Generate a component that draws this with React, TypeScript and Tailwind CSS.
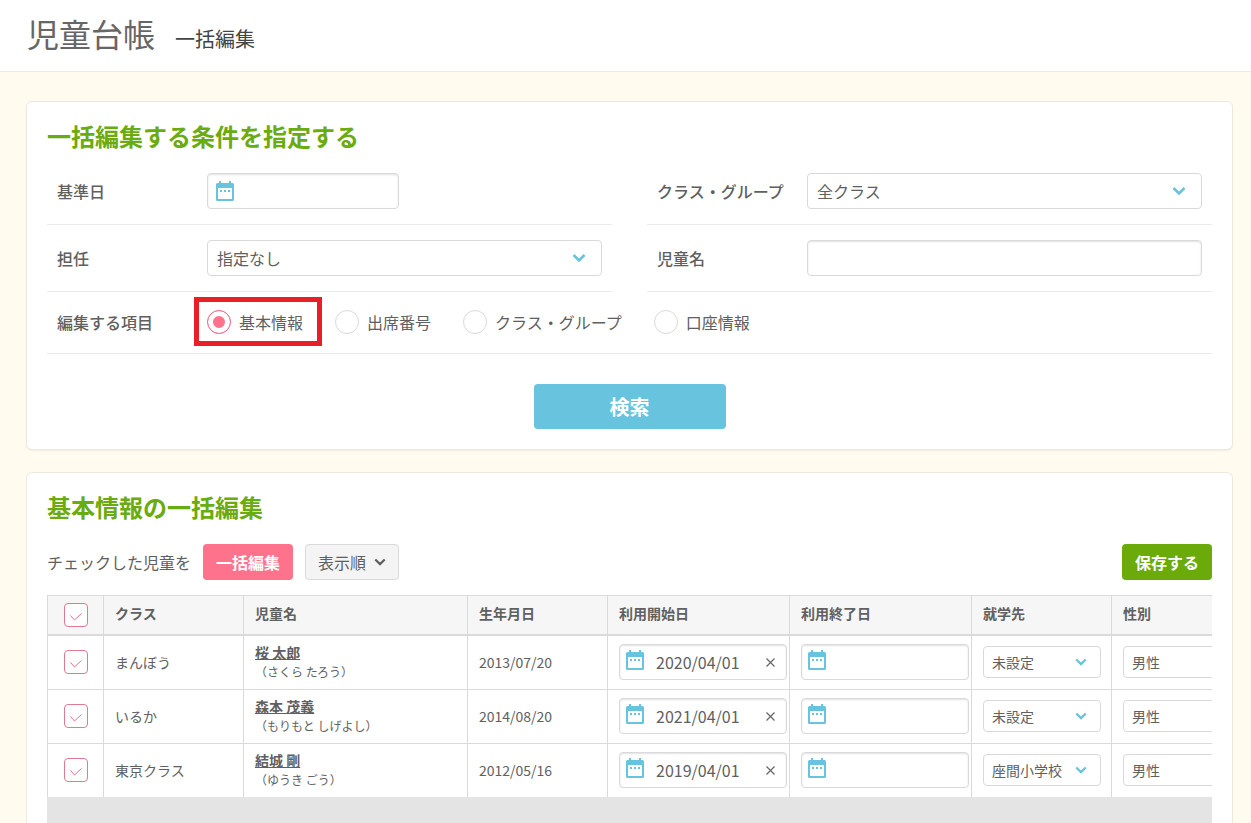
import { useState } from 'react';
import type { ReactNode } from 'react';
import clsx from 'clsx';

interface Child {
  id: number;
  className: string;
  name: string;
  kana: string;
  birthday: string;
  startDate: string;
  school: string;
  gender: string;
}

const children: Child[] = [
  { id: 1, className: 'まんぼう', name: '桜 太郎', kana: '（さくら たろう）', birthday: '2013/07/20', startDate: '2020/04/01', school: '未設定', gender: '男性' },
  { id: 2, className: 'いるか', name: '森本 茂義', kana: '（もりもと しげよし）', birthday: '2014/08/20', startDate: '2021/04/01', school: '未設定', gender: '男性' },
  { id: 3, className: '東京クラス', name: '結城 剛', kana: '（ゆうき ごう）', birthday: '2012/05/16', startDate: '2019/04/01', school: '座間小学校', gender: '男性' },
];

const editItems = ['基本情報', '出席番号', 'クラス・グループ', '口座情報'];

const columns = [
  { label: 'クラス', width: 'w-[140px]' },
  { label: '児童名', width: 'w-[224px]' },
  { label: '生年月日', width: 'w-[140px]' },
  { label: '利用開始日', width: 'w-[182px]' },
  { label: '利用終了日', width: 'w-[182px]' },
  { label: '就学先', width: 'w-[140px]' },
  { label: '性別', width: 'w-[140px]' },
];

const inputClass =
  'h-9 w-full rounded border border-[#d9d9d9] bg-white text-base shadow-[inset_0_1px_2px_rgba(0,0,0,0.12)] outline-none';

function CalendarIcon() {
  return (
    <svg viewBox="0 0 18 20" className="h-5 w-[18px]" aria-hidden="true">
      <path
        fill="#67c3de"
        fillRule="evenodd"
        d="M3 0h2v2h8V0h2v2h1.500A1.500 1.500 0 0 1 18 3.500v15a1.500 1.500 0 0 1-1.500 1.500h-15A1.500 1.500 0 0 1 0 18.500v-15A1.500 1.500 0 0 1 1.500 2H3zM2 7v11h14V7z"
      />
      <path fill="#67c3de" d="M4 9h2v2H4zM8 9h2v2H8zM12 9h2v2h-2z" />
    </svg>
  );
}

function Chevron({ className }: { className: string }) {
  return (
    <svg viewBox="0 0 14 9" className={className} fill="none" stroke="currentColor" aria-hidden="true">
      <path d="M1.500 1.500 7 7l5.500-5.500" strokeWidth="2.600" />
    </svg>
  );
}

function SelectBox({ id, label, value, small }: { id: string; label?: string; value: string; small?: boolean }) {
  return (
    <div className={clsx('relative', small ? 'w-[118px]' : 'w-full')}>
      <select
        id={id}
        aria-label={label}
        className={clsx(
          'w-full appearance-none rounded border border-[#d9d9d9] bg-white outline-none',
          small ? 'h-8 px-2 text-sm' : 'h-9 px-[9px] text-base',
        )}
      >
        <option>{value}</option>
      </select>
      <Chevron
        className={clsx(
          'pointer-events-none absolute top-1/2 -translate-y-1/2 text-[#67c3de]',
          small ? 'right-[14px] h-2 w-3' : 'right-4 h-[9px] w-[14px]',
        )}
      />
    </div>
  );
}

function DateField({ id, label, value, compact }: { id: string; label?: string; value?: string; compact?: boolean }) {
  const [date, setDate] = useState(value ?? '');

  return (
    <div className={clsx('relative', compact ? 'w-[168px]' : 'w-48')}>
      <input
        id={id}
        aria-label={label}
        type="text"
        value={date}
        onChange={(e) => setDate(e.target.value)}
        className={clsx(inputClass, 'pr-8 pl-9')}
      />
      <span
        className={clsx(
          'pointer-events-none absolute',
          compact ? 'top-[6px] left-[7px]' : 'top-2 left-[9px]',
        )}
      >
        <CalendarIcon />
      </span>
      {date && (
        <button
          type="button"
          aria-label="クリア"
          onClick={() => setDate('')}
          className="absolute top-[13px] right-[11px] h-[11px] w-[11px]"
        >
          <svg viewBox="0 0 11 11" fill="none" stroke="#666" strokeWidth="1.200" aria-hidden="true">
            <path d="m1.500 1.500 8 8M9.500 1.500l-8 8" />
          </svg>
        </button>
      )}
    </div>
  );
}

function CheckBox({ label }: { label: string }) {
  return (
    <div className="relative mx-auto h-6 w-6">
      <input
        type="checkbox"
        defaultChecked
        aria-label={label}
        className="peer block h-6 w-6 appearance-none rounded border border-[#e07a90] bg-white"
      />
      <svg
        viewBox="0 0 24 24"
        className="pointer-events-none absolute inset-0 hidden peer-checked:block"
        fill="none"
        stroke="#f0708c"
        aria-hidden="true"
      >
        <path d="m6.500 12.500 4 4.500L17.500 10.500" />
      </svg>
    </div>
  );
}

function FormRow({ id, label, children }: { id: string; label: string; children: ReactNode }) {
  return (
    <div className="flex items-center border-b border-[#eaeaea] px-[10px] py-[15px]">
      <label htmlFor={id} className="w-[150px] shrink-0 font-medium">
        {label}
      </label>
      <div className="min-w-0 flex-1">{children}</div>
    </div>
  );
}

function SearchPanel() {
  return (
    <section className="rounded-md border border-[#ece9df] bg-white px-5 pt-4 pb-5 shadow-[0_1px_2px_rgba(0,0,0,0.06)]">
      <h2 className="mb-1 text-2xl leading-9 font-bold text-[#6aab10]">一括編集する条件を指定する</h2>
      <form onSubmit={(e) => e.preventDefault()}>
        <div className="grid grid-cols-2 gap-x-[35px]">
          <FormRow id="base-date" label="基準日">
            <DateField id="base-date" />
          </FormRow>
          <FormRow id="class-group" label="クラス・グループ">
            <SelectBox id="class-group" value="全クラス" />
          </FormRow>
          <FormRow id="teacher" label="担任">
            <SelectBox id="teacher" value="指定なし" />
          </FormRow>
          <FormRow id="child-name" label="児童名">
            <input id="child-name" type="text" className={clsx(inputClass, 'px-[9px]')} />
          </FormRow>
        </div>

        <fieldset className="border-b border-[#eaeaea] px-[10px]">
          <div className="flex items-center pt-[18px] pb-[19px]">
            <span id="edit-items" className="w-[150px] shrink-0 font-medium">
              編集する項目
            </span>
            <div role="radiogroup" aria-labelledby="edit-items" className="flex flex-wrap gap-8">
              {editItems.map((item, i) => (
                <label key={item} className="relative flex items-center gap-2 leading-6">
                  <input
                    type="radio"
                    name="edit-item"
                    defaultChecked={i === 0}
                    className="h-6 w-6 appearance-none rounded-full border border-[#d9d9d9] bg-white checked:border-[#f0708c] checked:bg-[#ff728c] checked:shadow-[inset_0_0_0_5px_#fff]"
                  />
                  {item}
                  {i === 0 && (
                    <span className="pointer-events-none absolute -top-[13px] -right-[19px] -bottom-3 -left-[13px] border-[5px] border-[#e81f27]" />
                  )}
                </label>
              ))}
            </div>
          </div>
        </fieldset>

        <button
          type="submit"
          className="mx-auto mt-[30px] block h-[45px] w-48 rounded bg-[#67c3de] text-xl font-bold text-white"
        >
          検索
        </button>
      </form>
    </section>
  );
}

function ChildTable() {
  return (
    <div className="flex flex-1 flex-col overflow-hidden bg-[#e4e4e4]">
      <table className="w-[1204px] table-fixed border-separate border-spacing-0 bg-white text-sm">
        <thead>
          <tr className="h-[41px] bg-[#f6f6f6]">
            <th className="w-14 border-t border-b-2 border-l border-[#dadada] p-0">
              <CheckBox label="すべて選択" />
            </th>
            {columns.map((column) => (
              <th
                key={column.label}
                className={clsx(
                  'border-t border-b-2 border-l border-[#dadada] p-0 pb-1 pl-[11px] text-left font-bold',
                  column.width,
                )}
              >
                {column.label}
              </th>
            ))}
          </tr>
        </thead>
        <tbody className="[&_td]:border-b [&_td]:border-l [&_td]:border-[#dadada] [&_td]:p-0 [&_td]:pb-[2px] [&_td]:pl-[11px] [&_tr:last-child_td]:border-b-0">
          {children.map((child) => (
            <tr key={child.id} className="h-[54px] last:h-[53px]">
              <td>
                <div className="pr-[11px]">
                  <CheckBox label={child.name} />
                </div>
              </td>
              <td>{child.className}</td>
              <td>
                <a href="#" className="block leading-5 font-bold underline">
                  {child.name}
                </a>
                <span className="block text-xs leading-5">{child.kana}</span>
              </td>
              <td>{child.birthday}</td>
              <td>
                <DateField id={`start-${child.id}`} label="利用開始日" value={child.startDate} compact />
              </td>
              <td>
                <DateField id={`end-${child.id}`} label="利用終了日" compact />
              </td>
              <td>
                <SelectBox id={`school-${child.id}`} label="就学先" value={child.school} small />
              </td>
              <td>
                <SelectBox id={`gender-${child.id}`} label="性別" value={child.gender} small />
              </td>
            </tr>
          ))}
        </tbody>
      </table>
      <div className="min-h-6 flex-1" />
    </div>
  );
}

function EditPanel() {
  return (
    <section className="flex flex-1 flex-col rounded-t-md border border-b-0 border-[#ece9df] bg-white px-5 pt-4">
      <h2 className="text-2xl leading-9 font-bold text-[#6aab10]">基本情報の一括編集</h2>
      <div className="mt-[19px] mb-[15px] flex items-center gap-3">
        <span>チェックした児童を</span>
        <button type="button" className="h-9 w-[90px] rounded bg-[#ff728c] font-bold text-white">
          一括編集
        </button>
        <button
          type="button"
          className="flex h-9 items-center gap-2 rounded border border-[#d9d9d9] bg-[#f4f4f4] px-3"
        >
          表示順
          <Chevron className="h-2 w-3" />
        </button>
        <button type="button" className="ml-auto h-9 w-[90px] rounded bg-[#6aab0a] font-bold text-white">
          保存する
        </button>
      </div>
      <ChildTable />
    </section>
  );
}

export default function App() {
  return (
    <div className="flex min-h-screen flex-col bg-[#fffbee] font-['Noto_Sans_CJK_JP',sans-serif] text-base text-[#606060]">
      <header className="flex h-[72px] items-baseline gap-5 border-b border-[#ebebeb] bg-white pt-[9px] pl-[27px]">
        <h1 className="text-[32px] leading-[48px] text-[#666]">児童台帳</h1>
        <p className="text-xl text-[#444]">一括編集</p>
      </header>
      <main className="flex flex-1 flex-col gap-[22px] pt-[29px] pr-[18px] pl-[26px]">
        <SearchPanel />
        <EditPanel />
      </main>
    </div>
  );
}
